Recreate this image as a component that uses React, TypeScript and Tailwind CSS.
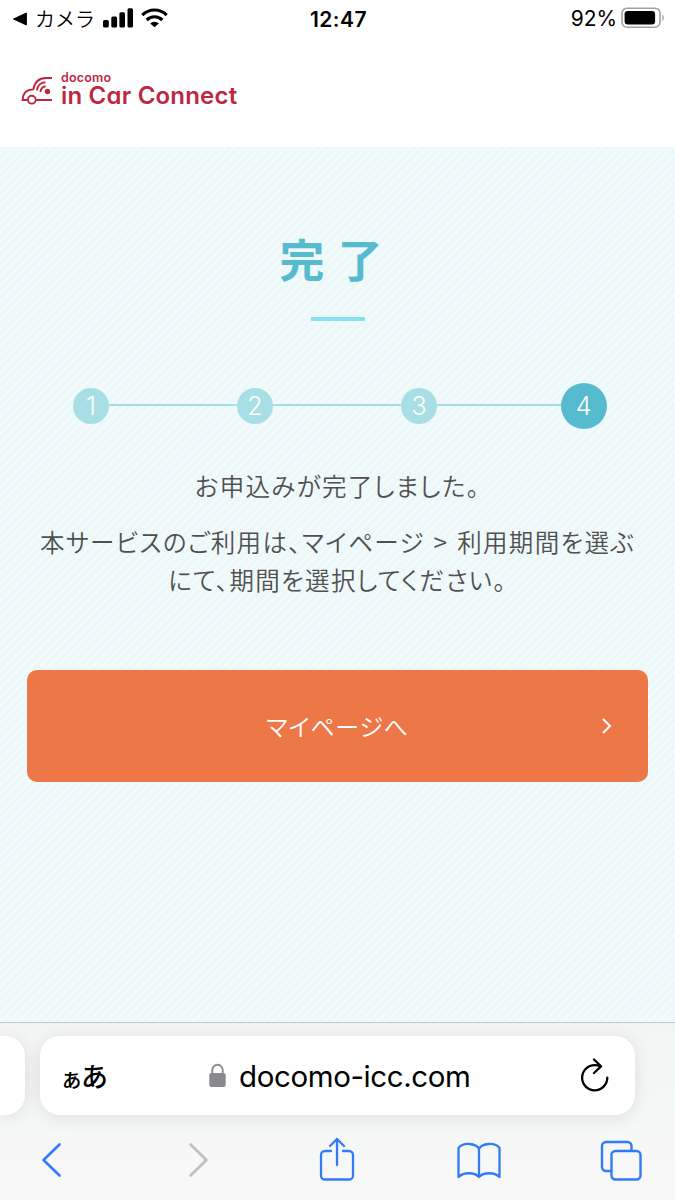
import React from "react";

const JP = "font-['Noto_Sans_CJK_JP',sans-serif]";

function StatusBar() {
  return (
    <div className="flex h-[37px] items-center justify-between pl-[12px] pr-[10px] text-black">
      <div className="flex w-[220px] items-center">
        <svg width="16" height="16" viewBox="0 0 16 16"><path d="M1.5 8 14.4 2V14Z" fill="#000" stroke="#000" strokeLinejoin="round" /></svg>
        <span className="ml-[7px] w-[62px] whitespace-nowrap font-['Noto_Sans_CJK_JP',sans-serif] text-[20px] leading-[24px] font-[350]">カメラ</span>
        <svg className="ml-[6px] mb-[2px]" width="30" height="20" viewBox="0 0 30 20">
          <rect x="0" y="12" width="5.8" height="7.400" rx="1.5" />
          <rect x="8.3" y="8.4" width="5.8" height="11" rx="1.5" />
          <rect x="16.4" y="4.2" width="5.6" height="15.200" rx="1.5" />
          <rect x="24.5" y="0.3" width="5.5" height="19.100" rx="1.5" />
        </svg>
        <svg className="ml-[8px] mb-[1px]" width="27" height="20" viewBox="0 0 27 20" fill="none" stroke="#000" strokeWidth="3.2">
          <path d="M1.3 7.1a17.2 17.2 0 0 1 24.4 0" />
          <path d="M5.7 12a11 11 0 0 1 15.6 0" />
          <path d="M13.5 19.3 9.2 15.5a6.4 6.4 0 0 1 8.6 0Z" fill="#000" stroke="none" />
        </svg>
      </div>
      <span className="mt-[2px] w-[60px] whitespace-nowrap text-center font-['Inter',sans-serif] text-[21px] font-semibold tracking-[0.500px]">12:47</span>
      <div className="flex w-[220px] items-center justify-end">
        <span className="mt-px font-['Inter',sans-serif] text-[21px] tracking-[-0.100px]">92%</span>
        <svg className="ml-[4px] mb-[2px]" width="44" height="22" viewBox="0 0 44 22">
          <rect x="1" y="1.2" width="38" height="19" rx="5" fill="none" stroke="#a2a2a2" strokeWidth="1.6" />
          <rect x="3.6" y="4" width="30.5" height="13.5" rx="3.2" />
          <path d="M41.3 7.5c2 1 2 5.500 0 6.500Z" fill="#a2a2a2" />
        </svg>
      </div>
    </div>
  );
}

function Logo() {
  return (
    <div className="flex h-[110px] items-start pl-[21px] text-[#bd2841]">
      <svg className="mt-[38px]" width="32" height="30" viewBox="0 0 32 30" fill="none" stroke="#bd2841" strokeWidth="1.9">
        <path d="M31 3H25C17.500 3 13.500 8 12.300 14.400C6 14.600 1.800 17.800 1.600 25H6.600M15 25H31" />
        <circle cx="10.800" cy="24.700" r="3.900" />
        <path d="M24.500 7.300C19.500 7.500 16.300 11 16 15.500M24.700 11.300C21.500 11.800 19.800 13.500 19.400 17" />
        <circle cx="26.500" cy="16.500" r="2.700" fill="#bd2841" stroke="none" />
      </svg>
      <div className="mt-[35px] ml-[8px] flex flex-col font-['Inter',sans-serif] [font-feature-settings:'cv11']">
        <div className="h-[12px] whitespace-nowrap text-[12.500px] leading-[12px] font-semibold tracking-[0.200px]">docomo</div>
        <div className="whitespace-nowrap text-[24px] leading-[24px] font-semibold tracking-[0.200px]">in Car Connect</div>
      </div>
    </div>
  );
}

function Steps() {
  return (
    <div className="mt-[62px] flex h-[46px] items-center pl-[73px] font-['Inter',sans-serif] text-[25px] font-light text-white">
      {[1, 2, 3].map((n) => (
        <React.Fragment key={n}>
          <span className="flex size-[36px] shrink-0 items-center justify-center rounded-full bg-[#a8dfe4] leading-none">{n}</span>
          <span className={n < 3 ? "mb-[2px] h-[2px] w-[128px] bg-[#a4e0e8]" : "mb-[2px] h-[2px] w-[124px] bg-[#a4e0e8]"} />
        </React.Fragment>
      ))}
      <span className="flex size-[46px] shrink-0 items-center justify-center rounded-full bg-[#56bbcf] pr-px leading-none">4</span>
    </div>
  );
}

function BrowserBar() {
  return (
    <footer className="flex h-[178px] flex-col overflow-hidden border-t border-[#c2c7c9] bg-linear-to-b from-[#f3f5f5] to-[#f8f8f8]">
      <div className="mt-[13px] flex h-[79px] gap-[15px]">
        <div className="w-[25px] rounded-r-[20px] bg-white shadow-[0_3px_18px_rgba(0,0,0,0.1)]" />
        <div className="flex w-[595px] items-center rounded-[20px] bg-white pl-[22px] pr-[26px] text-black shadow-[0_3px_18px_rgba(0,0,0,0.1)]">
          <span className="flex w-[60px] items-baseline font-['Noto_Sans_CJK_JP',sans-serif] font-medium leading-none">
            <span className="-ml-[2px] text-[23px]">ぁ</span><span className="ml-[-2px] text-[27px]">あ</span>
          </span>
          <svg className="ml-[87px]" width="17" height="25" viewBox="0 0 17 25">
            <rect x="0.300" y="10" width="16.400" height="14" rx="2.200" fill="#8a8a8e" />
            <path d="M3.300 11V7a5.200 5.200 0 0 1 10.400 0v4" fill="none" stroke="#8a8a8e" strokeWidth="1.900" />
          </svg>
          <span className="mt-px ml-[13px] whitespace-nowrap font-['Inter',sans-serif] text-[29.500px] tracking-[-0.400px]">docomo-icc.com</span>
          <svg className="mb-px ml-auto" width="29" height="34" viewBox="0 0 29 34" fill="none" stroke="#000" strokeWidth="2.300" strokeLinecap="round" strokeLinejoin="round">
            <path d="M27.300 19.700a12.600 12.600 0 1 1-12.600-12.600c2 0 3.800.3 5.500 1.100M14 1.500l7 6.800-7 6.700" />
          </svg>
        </div>
      </div>
      <div className="flex h-[85px] items-center pt-[5px] pl-[41px] pr-[33px] text-[#337af6]">
        <svg width="21" height="36" viewBox="0 0 21 36" fill="none" stroke="currentColor" strokeWidth="2.600" strokeLinecap="round" strokeLinejoin="round"><path d="M18.500 2.500 2.500 18l16 15.500" /></svg>
        <svg className="ml-[126px]" width="21" height="36" viewBox="0 0 21 36" fill="none" stroke="#bfbfbf" strokeWidth="2.600" strokeLinecap="round" strokeLinejoin="round"><path d="m2.500 2.500 16 15.500-16 15.500" /></svg>
        <svg className="mb-[2px] ml-[110px]" width="36" height="46" viewBox="0 0 36 46" fill="none" stroke="currentColor" strokeWidth="2.300" strokeLinecap="round" strokeLinejoin="round">
          <path d="M12 15H6a4 4 0 0 0-4 4v20.500a4 4 0 0 0 4 4h24a4 4 0 0 0 4-4V19a4 4 0 0 0-4-4h-6M18 29V3M11 10l7-7 7 7" />
        </svg>
        <svg className="mt-px ml-[102px]" width="44" height="38" viewBox="0 0 44 38" fill="none" stroke="currentColor" strokeWidth="2.300" strokeLinejoin="round">
          <path d="M22 7C19 1 6 0 1.500 6v29c5-5 16-5 20.500 0 4.500-5 15.500-5 20.500 0V6C38 0 25 1 22 7Zm0 0v28" />
        </svg>
        <svg className="ml-[99px]" width="42" height="41" viewBox="0 0 42 41" fill="none" stroke="currentColor" strokeWidth="2.400">
          <rect x="11.500" y="11" width="29" height="28.500" rx="4" />
          <path d="M11 31H6a4 4 0 0 1-4-4V6a4 4 0 0 1 4-4h21.500a4 4 0 0 1 4 4v5" />
        </svg>
      </div>
    </footer>
  );
}

export default function App() {
  return (
    <div className="flex h-[1200px] w-[675px] flex-col overflow-hidden bg-white">
      <StatusBar />
      <Logo />
      <main className="flex flex-1 flex-col bg-[#edf8f9] bg-[repeating-linear-gradient(135deg,#ecf8f9_0px,#ecf8f9_3.600px,#f5fbfb_4.400px,#f5fbfb_5.400px,#ecf8f9_6.200px)]">
        <h1 className="mt-[75px] h-[72px] text-center font-['Noto_Sans_CJK_JP',sans-serif] text-[45px] leading-[74px] font-bold tracking-[13px] text-[#56bbcf]">完了</h1>
        <div className="mx-auto mt-[23px] h-[4px] w-[54px] bg-[#87e1ee]" />
        <Steps />
        <div className={`${JP} mt-[38px] text-center text-[24.500px] leading-[38px] font-[350] tracking-[1.350px] text-[#505050] [font-feature-settings:'palt']`}>
          <p>お申込みが完了しました。</p>
          <p className="mt-[18px] whitespace-nowrap">本サービスのご利用は、マイページ<span className="mx-[2px]"> &gt; </span>利用期間を選ぶ<br />にて、期間を選択してください。</p>
        </div>
        <button className="mx-[27px] mt-[71px] flex h-[112px] items-center justify-center rounded-[10px] bg-[#ee7748] pl-[36px] pr-[36px] text-white">
          <span className={`${JP} flex-1 pl-[10px] pb-px text-[24px] font-[350] tracking-[0.800px] [font-feature-settings:'palt']`}>マイページへ</span>
          <svg width="10" height="16" viewBox="0 0 10 16" fill="none" stroke="#fff" strokeWidth="2"><path d="m1 1 7 7-7 7" /></svg>
        </button>
      </main>
      <BrowserBar />
    </div>
  );
}
